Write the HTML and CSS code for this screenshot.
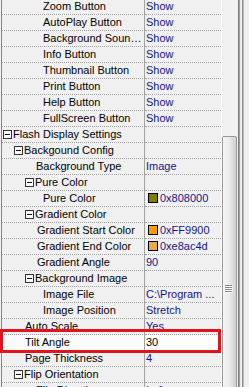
FILE: index.html
```html
<!DOCTYPE html>
<html>
<head>
<meta charset="utf-8">
<link rel="stylesheet" href="styles.css">
</head>
<body>
<div class="frame">
  <div class="grid">
    <div class="rows">
      <div class="row"><div class="name l3">Zoom Button</div><div class="value">Show</div></div>
      <div class="row"><div class="name l3">AutoPlay Button</div><div class="value">Show</div></div>
      <div class="row"><div class="name l3">Background Soun…</div><div class="value">Show</div></div>
      <div class="row"><div class="name l3">Info Button</div><div class="value">Show</div></div>
      <div class="row"><div class="name l3">Thumbnail Button</div><div class="value">Show</div></div>
      <div class="row"><div class="name l3">Print Button</div><div class="value">Show</div></div>
      <div class="row"><div class="name l3">Help Button</div><div class="value">Show</div></div>
      <div class="row"><div class="name l3">FullScreen Button</div><div class="value">Show</div></div>
      <div class="row"><div class="name c0"><svg class="box" width="9" height="9" viewBox="0 0 9 9"><rect x="0.5" y="0.5" width="8" height="8" fill="#fff" stroke="#333"/><path d="M2 4.5h5" stroke="#111"/></svg>Flash Display Settings</div><div class="value"></div></div>
      <div class="row"><div class="name c1"><svg class="box" width="9" height="9" viewBox="0 0 9 9"><rect x="0.5" y="0.5" width="8" height="8" fill="#fff" stroke="#333"/><path d="M2 4.5h5" stroke="#111"/></svg>Backgound Config</div><div class="value"></div></div>
      <div class="row"><div class="name l2">Background Type</div><div class="value">Image</div></div>
      <div class="row"><div class="name c2"><svg class="box" width="9" height="9" viewBox="0 0 9 9"><rect x="0.5" y="0.5" width="8" height="8" fill="#fff" stroke="#333"/><path d="M2 4.5h5" stroke="#111"/></svg>Pure Color</div><div class="value"></div></div>
      <div class="row"><div class="name l3">Pure Color</div><div class="value"><span class="swatch olive"></span>0x808000</div></div>
      <div class="row"><div class="name c2"><svg class="box" width="9" height="9" viewBox="0 0 9 9"><rect x="0.5" y="0.5" width="8" height="8" fill="#fff" stroke="#333"/><path d="M2 4.5h5" stroke="#111"/></svg>Gradient Color</div><div class="value"></div></div>
      <div class="row"><div class="name l2b">Gradient Start Color</div><div class="value"><span class="swatch orange"></span>0xFF9900</div></div>
      <div class="row"><div class="name l2b">Gradient End Color</div><div class="value"><span class="swatch tan"></span>0xe8ac4d</div></div>
      <div class="row"><div class="name l2b">Gradient Angle</div><div class="value">90</div></div>
      <div class="row"><div class="name c2"><svg class="box" width="9" height="9" viewBox="0 0 9 9"><rect x="0.5" y="0.5" width="8" height="8" fill="#fff" stroke="#333"/><path d="M2 4.5h5" stroke="#111"/></svg>Background Image</div><div class="value"></div></div>
      <div class="row"><div class="name l3">Image File</div><div class="value">C:\Program ...</div></div>
      <div class="row"><div class="name l3">Image Position</div><div class="value">Stretch</div></div>
      <div class="row"><div class="name l1">Auto Scale</div><div class="value">Yes</div></div>
      <div class="row edit"><div class="name l1">Tilt Angle</div><div class="value">30</div></div>
      <div class="row"><div class="name l1">Page Thickness</div><div class="value">4</div></div>
      <div class="row"><div class="name c1"><svg class="box" width="9" height="9" viewBox="0 0 9 9"><rect x="0.5" y="0.5" width="8" height="8" fill="#fff" stroke="#333"/><path d="M2 4.5h5" stroke="#111"/></svg>Flip Orientation</div><div class="value"></div></div>
      <div class="row"><div class="name l2">Flip Direction</div><div class="value">Left</div></div>
    </div>
  </div>
  <div class="scroll">
    <div class="thumb">
      <svg class="grip" width="8" height="8" viewBox="0 0 8 8"><path d="M0 0.5h7M0 2.5h7M0 4.5h7M0 6.5h7" stroke="#8a8a8a"/><path d="M1 1.5h7M1 3.5h7M1 5.5h7M1 7.5h7" stroke="#fbfbfb"/></svg>
    </div>
  </div>
  <div class="edge"></div>
  <div class="mark"></div>
</div>
</body>
</html>
```

FILE: styles.css
```css
html, body {
  margin: 0;
  padding: 0;
}
body {
  width: 249px;
  height: 387px;
  overflow: hidden;
  background: #f0f0f0;
  font-family: "Liberation Sans", Arial, sans-serif;
  font-size: 11px;
  color: #000;
}
.frame {
  position: relative;
  display: flex;
  height: 387px;
  overflow: hidden;
}
.grid {
  flex: none;
  width: 219px;
  margin-left: 1px;
  border-left: 1px solid #868686;
  border-right: 1px solid #ffffff;
  overflow: hidden;
}
.rows {
  margin-top: -1px;
}
.row {
  display: flex;
  height: 16px;
}
.name {
  flex: none;
  width: 143px;
  height: 16px;
  box-sizing: border-box;
  border-right: 1px solid #a3a3a3;
  border-bottom: 1px dotted #a0a0a0;
  line-height: 15px;
  white-space: nowrap;
  overflow: hidden;
}
.value {
  flex: 1;
  height: 16px;
  box-sizing: border-box;
  border-bottom: 1px dotted #a0a0a0;
  padding-left: 1px;
  line-height: 15px;
  color: #14148a;
  white-space: nowrap;
  overflow: hidden;
}
.l1 { padding-left: 23px; }
.l2 { padding-left: 34px; }
.l2b { padding-left: 35px; }
.l3 { padding-left: 41px; }
.c0 { padding-left: 1px; }
.c1 { padding-left: 12px; }
.c2 { padding-left: 23px; }
.box {
  display: inline-block;
  vertical-align: -1px;
  margin-right: 1px;
}
.swatch {
  display: inline-block;
  width: 10px;
  height: 10px;
  box-sizing: border-box;
  border: 1px solid #000;
  margin: 0 2px 0 2px;
  vertical-align: -1px;
}
.olive { background: #808000; }
.orange { background: #ff9900; }
.tan { background: #e8ac4d; }
.edit .name {
  background: #fbfbfb;
}
.edit .value {
  background: #ffffff;
  color: #000;
}
.scroll {
  flex: none;
  width: 16px;
  background: #f0f0f0;
}
.thumb {
  width: 15px;
  height: 300px;
  margin-top: 136px;
  box-sizing: border-box;
  border: 1px solid #979797;
  border-radius: 2px 2px 0 0;
  background: linear-gradient(to right, #f5f5f5 0%, #ececec 45%, #dadada 80%, #cfcfcf 100%);
  padding: 148px 0 0 2px;
}
.grip {
  display: block;
}
.edge {
  flex: none;
  width: 11px;
  background: linear-gradient(to right,
    #7c7c7c 0px, #7c7c7c 1px,
    #a0a0a0 1px, #a0a0a0 2px,
    #e6e6e6 2px, #e6e6e6 3px,
    #fafafa 3px, #fafafa 4px,
    #8c8c8c 4px, #8c8c8c 5px,
    #bdbdbd 5px, #bdbdbd 6px,
    #f0f0f0 6px);
}
.mark {
  position: absolute;
  left: 0;
  top: 329px;
  width: 221px;
  height: 24px;
  box-sizing: border-box;
  border: 3px solid #e0141c;
}
```
